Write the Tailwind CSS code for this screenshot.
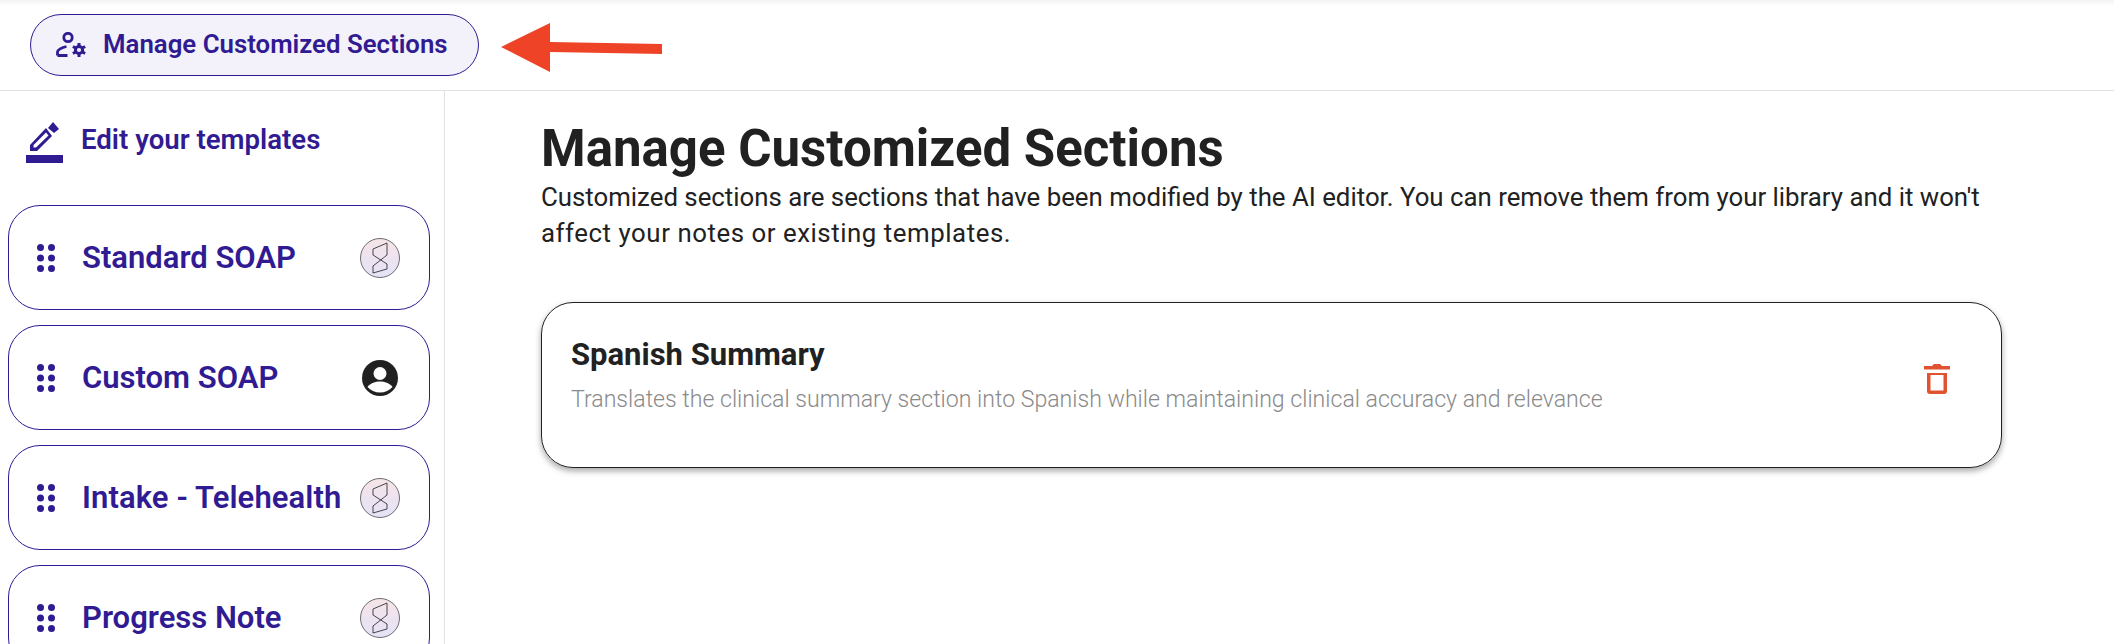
<!DOCTYPE html>
<html lang="en">
<head>
    <meta charset="UTF-8">
    <title>Manage Customized Sections</title>
    <script src="https://cdn.jsdelivr.net/npm/@tailwindcss/browser@4"></script>
</head>
<body class="bg-white h-[644px] overflow-hidden font-['Roboto',sans-serif] text-[#212121]">

    <svg width="0" height="0" class="absolute">
        <defs>
            <linearGradient id="logoBg" x1="0" y1="0" x2="0" y2="1">
                <stop offset="0" stop-color="#f6e4e8"/>
                <stop offset="1" stop-color="#e4e2f8"/>
            </linearGradient>
            <symbol id="logo" viewBox="0 0 40 40">
                <circle cx="20" cy="20" r="19.500" fill="url(#logoBg)" stroke="#4a4a4a" stroke-width="0.8"/>
                <path d="M27 5L13 11V17L27 26V31L13 35V28L27 17Z" fill="none" stroke="#333" stroke-width="0.9"/>
            </symbol>
            <symbol id="grip" viewBox="0 0 18 28">
                <circle cx="3.500" cy="3.500" r="3.500"/><circle cx="14.500" cy="3.500" r="3.500"/>
                <circle cx="3.500" cy="14" r="3.500"/><circle cx="14.500" cy="14" r="3.500"/>
                <circle cx="3.500" cy="24.500" r="3.500"/><circle cx="14.500" cy="24.500" r="3.500"/>
            </symbol>
        </defs>
    </svg>

    <!-- Top bar -->
    <header class="relative h-[91px] border-b border-[#e2e2e2] bg-gradient-to-b from-[#f4f4f4] to-white to-[6px] pl-[30px] pt-[14px]">
        <button class="w-[449px] h-[62px] rounded-[31px] border border-[#311b92] bg-[#f3f2fa] flex items-center pl-[25px] text-[#311b92]">
            <svg width="30" height="26" viewBox="0 0 30 26" fill="none" stroke="#311b92" stroke-width="2.800" class="shrink-0">
                <circle cx="12" cy="5.500" r="4.200"/>
                <path d="M1.500 23.500v-3.500c0-2 4-4.500 9-5.500M1.500 23.500h10"/>
                <circle cx="23" cy="18" r="3.600" stroke-width="3"/>
                <path d="M23 11v3M23 22v3M16.900 14.500l2.600 1.500M26.500 20l2.600 1.500M16.900 21.500l2.600-1.500M26.500 16l2.600-1.500" stroke-width="3"/>
            </svg>
            <span class="ml-[17px] text-[25.800px] leading-none font-semibold whitespace-nowrap">Manage Customized Sections</span>
        </button>
        <!-- Annotation arrow -->
        <svg class="absolute left-[500px] top-[20px]" width="164" height="56" viewBox="0 0 164 56">
            <path d="M1 27L50 3V22L162 24V34L50 32V52Z" fill="#ee4326"/>
        </svg>
    </header>

    <div class="flex h-[553px]">
        <!-- Sidebar -->
        <aside class="w-[445px] shrink-0 border-r border-[#e2e2e2] pl-[8px] pr-[14px] overflow-hidden">
            <div class="flex items-center h-[114px] pl-[17px] text-[#311b92]">
                <svg width="40" height="44" viewBox="0 0 40 44" class="mb-[12px] shrink-0">
                    <path d="M5 31V25L21 8L27 16L12 31ZM8.500 27.500H11L23.500 15.500L21 12.500L8.500 25Z" fill="#311b92" fill-rule="evenodd"/>
                    <path d="M23 8L28 2L34 9L29 13Z" fill="#311b92"/>
                    <rect x="1" y="35" width="37" height="8" fill="#311b92"/>
                </svg>
                <span class="ml-[16px] mb-[16px] text-[27.600px] font-semibold leading-none whitespace-nowrap">Edit your templates</span>
            </div>
            <div class="flex flex-col gap-[15px]">
                <div class="shrink-0 h-[105px] rounded-[32px] border border-[#311b92] flex items-center pl-[28px] pr-[29px] text-[#311b92]">
                    <svg width="18" height="28" fill="#311b92" class="shrink-0"><use href="#grip"/></svg>
                    <span class="ml-[27px] mt-[1px] text-[31px] font-semibold whitespace-nowrap">Standard SOAP</span>
                    <svg width="40" height="40" class="ml-auto shrink-0"><use href="#logo"/></svg>
                </div>
                <div class="shrink-0 h-[105px] rounded-[32px] border border-[#311b92] flex items-center pl-[28px] pr-[29px] text-[#311b92]">
                    <svg width="18" height="28" fill="#311b92" class="shrink-0"><use href="#grip"/></svg>
                    <span class="ml-[27px] mt-[1px] text-[31px] font-semibold whitespace-nowrap">Custom SOAP</span>
                    <svg width="36" height="36" viewBox="0 0 36 36" class="ml-auto mr-[2px] shrink-0">
                        <circle cx="18" cy="18" r="18" fill="#212121"/>
                        <circle cx="18" cy="13.500" r="6.500" fill="#fff"/>
                        <path d="M5.500 27c3-4 8-5.500 12.500-5.500S27.500 23 30.500 27c-3 3.500-7.500 5.500-12.500 5.500S8.500 30.500 5.500 27z" fill="#fff"/>
                    </svg>
                </div>
                <div class="shrink-0 h-[105px] rounded-[32px] border border-[#311b92] flex items-center pl-[28px] pr-[29px] text-[#311b92]">
                    <svg width="18" height="28" fill="#311b92" class="shrink-0"><use href="#grip"/></svg>
                    <span class="ml-[27px] mt-[1px] text-[31px] tracking-[0.1px] font-semibold whitespace-nowrap">Intake - Telehealth</span>
                    <svg width="40" height="40" class="ml-auto shrink-0"><use href="#logo"/></svg>
                </div>
                <div class="shrink-0 h-[105px] rounded-[32px] border border-[#311b92] flex items-center pl-[28px] pr-[29px] text-[#311b92]">
                    <svg width="18" height="28" fill="#311b92" class="shrink-0"><use href="#grip"/></svg>
                    <span class="ml-[27px] mt-[1px] text-[31px] font-semibold whitespace-nowrap">Progress Note</span>
                    <svg width="40" height="40" class="ml-auto shrink-0"><use href="#logo"/></svg>
                </div>
            </div>
        </aside>

        <!-- Main -->
        <main class="flex-1 min-w-0 pl-[96px] pr-[112px] pt-[30px]">
            <h1 class="text-[51px] leading-[56px] font-bold">Manage Customized Sections</h1>
            <p class="mt-[2px] w-[1462px] text-[25.800px] leading-[36px]">Customized sections are sections that have been modified by the AI editor. You can remove them from your library and it won't <span class="tracking-[0.55px]">affect your notes or existing templates.</span></p>
            <div class="mt-[51px] h-[166px] rounded-[32px] border-[1.500px] border-[#212121] shadow-[0_3px_6px_rgba(0,0,0,0.35)] flex items-center pl-[29px] pr-[51px]">
                <div class="pb-[21px]">
                    <div class="text-[31px] leading-[40px] font-bold">Spanish Summary</div>
                    <div class="mt-[11px] text-[23.100px] leading-[28px] font-light text-[#8a8a8a]">Translates the clinical summary section into Spanish while maintaining clinical accuracy and relevance</div>
                </div>
                <svg width="26" height="34" viewBox="0 0 26 34" class="ml-auto mb-[14px] shrink-0">
                    <path d="M0 5h8l2-2h6l2 2h8v3.500H0z" fill="#e05230"/>
                    <path d="M3 12h20v18a3 3 0 0 1-3 3H6a3 3 0 0 1-3-3zM6.500 14v15.500h13V14z" fill="#e05230" fill-rule="evenodd"/>
                </svg>
            </div>
        </main>
    </div>

</body>
</html>
